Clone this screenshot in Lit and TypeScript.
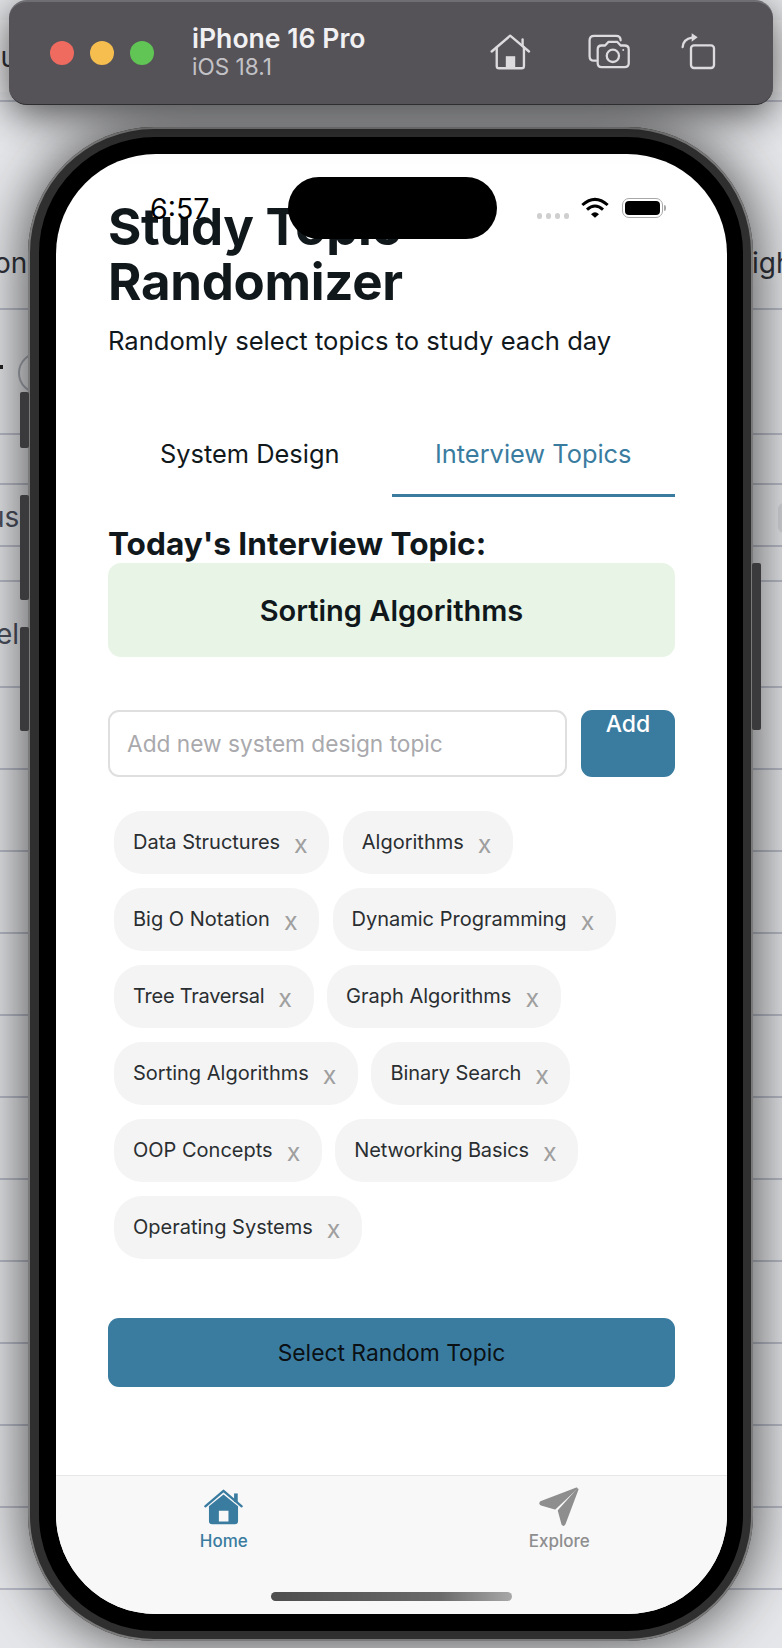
import { LitElement, html, css, svg } from 'lit'
import { customElement } from 'lit/decorators.js'

const TOPICS: [string, number][] = [
  ['Data Structures', 0],
  ['Algorithms', 0],
  ['Big O Notation', 0],
  ['Dynamic Programming', 0],
  ['Tree Traversal', -0.25],
  ['Graph Algorithms', 0],
  ['Sorting Algorithms', 0],
  ['Binary Search', -0.1],
  ['OOP Concepts', 0],
  ['Networking Basics', -0.12],
  ['Operating Systems', 0],
]

// horizontal rules of the app window behind the simulator
const RULES = [100, 308, 433, 483, 545, 580, 686, 768, 850, 932, 1014, 1096, 1178, 1260, 1342, 1424, 1506, 1588]

const toolbarHome = svg`<svg class="tool" width="42" height="37" viewBox="55 95 125 110" fill="none" stroke="currentColor" stroke-width="7" stroke-linecap="round" stroke-linejoin="round">
  <path d="M63 150 L118 103 L174 150" />
  <path d="M155 114 V132" />
  <path d="M78 138 V193 Q78 200 85 200 H152 Q159 200 159 193 V138" />
  <rect x="105" y="164" width="28" height="36" fill="currentColor" stroke="none" />
</svg>`

const toolbarCamera = svg`<svg class="tool" width="44" height="36" viewBox="350 95 136 110" fill="none" stroke="currentColor" stroke-width="7" stroke-linecap="round" stroke-linejoin="round">
  <path d="M378 180 H372 Q358 180 358 166 V117 Q358 103 372 103 H440 Q454 103 454 117" />
  <path d="M395 200 Q383 200 383 188 V145 Q383 133 395 133 H406 L416 122 H444 L454 133 H466 Q479 133 479 145 V188 Q479 200 466 200 Z" />
  <circle cx="430" cy="165" r="19" />
  <circle cx="462" cy="147" r="3" fill="currentColor" stroke="none" />
</svg>`

const toolbarRotate = svg`<svg class="tool" width="36" height="38" viewBox="630 88 108 112" fill="none" stroke="currentColor" stroke-width="7" stroke-linecap="round" stroke-linejoin="round">
  <rect x="663" y="127" width="69" height="68" rx="9" />
  <path d="M638 132 Q640 108 666 104" />
  <path d="M665 91 L683 103 L665 116 Z" fill="currentColor" stroke="none" />
</svg>`

const tabHome = svg`<svg width="41" height="38" viewBox="100 58 124 112">
  <path d="M107 112 L162 65 L217 112" fill="none" stroke="currentColor" stroke-width="7" stroke-linecap="round" stroke-linejoin="round" />
  <rect x="194" y="73" width="11" height="26" fill="currentColor" />
  <path fill-rule="evenodd" fill="currentColor" d="M118 112 L162 76 L206 112 V156 Q206 166 196 166 H128 Q118 166 118 156 Z M148 125 V158 H177 V125 Z" />
</svg>`

const tabExplore = svg`<svg width="42" height="42" viewBox="1104 50 126 126" fill="currentColor">
  <path stroke="currentColor" stroke-width="5" stroke-linejoin="round" d="M1220 57 L1112 98 Q1108 103 1114 106 L1155 118 Z" />
  <path stroke="currentColor" stroke-width="5" stroke-linejoin="round" d="M1223 60 L1166 124 L1177 165 Q1181 170 1184 164 Z" />
</svg>`

const wifi = svg`<svg width="28" height="22" viewBox="186 40 84 62" fill="none" stroke="#000" stroke-width="9">
  <path d="M190 62 Q228 28 266 62" />
  <path d="M204 76 Q228 54 252 76" />
  <path d="M216 90 L228 100 L240 90 Q228 78 216 90 Z" fill="#000" stroke="none" />
</svg>`

@customElement('app-root')
export class AppRoot extends LitElement {
  static get styles() {
    return css`
      :host {
        display: block;
        position: relative;
        width: 782px;
        height: 1648px;
        overflow: hidden;
        background: #e6e7ea;
        font-family: 'Inter', 'Liberation Sans', sans-serif;
      }

      .rule {
        position: absolute;
        left: 0;
        right: 0;
        height: 2px;
        background: #b9bcc8;
      }

      .band {
        position: absolute;
        top: 20px;
        height: 72px;
        left: 0;
        right: 0;
        background: #ececee;
      }

      .frag {
        position: absolute;
        font-size: 28px;
        line-height: 34px;
        color: #30333a;
      }

      .frag.dim {
        color: #4a4f5c;
      }

      .ring {
        position: absolute;
        left: 18px;
        top: 352px;
        width: 38px;
        height: 38px;
        border: 2px solid #a8abb5;
        border-radius: 50%;
      }

      .tick {
        position: absolute;
        left: 0;
        top: 365px;
        width: 3px;
        height: 4px;
        background: #222;
      }

      .pill {
        position: absolute;
        left: 778px;
        top: 503px;
        width: 12px;
        height: 30px;
        border-radius: 6px;
        background: #d4d5d8;
      }

      .desktop {
        position: relative;
        display: flex;
        flex-direction: column;
      }

      .toolbar {
        box-sizing: border-box;
        position: relative;
        z-index: 2;
        height: 105px;
        margin: 0 9px 0 9px;
        padding: 0 57px 4px 41px;
        display: flex;
        align-items: center;
        background: #555358;
        border-top: 2px solid #6f6e72;
        border-bottom: 1px solid #2e2d30;
        border-radius: 18px;
        box-shadow: 0 10px 40px rgba(0, 0, 0, 0.65);
        color: #dddbde;
      }

      .dots {
        display: flex;
        gap: 16px;
        margin-top: 4px;
      }

      .dot {
        width: 24px;
        height: 24px;
        border-radius: 50%;
      }

      .device-name {
        margin-left: 38px;
        flex: 1;
      }

      .device-name b {
        display: block;
        font-size: 26.6px;
        line-height: 32px;
        font-weight: 600;
        color: #f1f0f2;
      }

      .device-name span {
        display: block;
        font-size: 22.6px;
        line-height: 26px;
        color: #c3c2c6;
      }

      .tools {
        display: flex;
        align-items: center;
      }

      .tool {
        display: block;
      }

      .tools .tool:nth-child(1) {
        margin-right: 56px;
      }

      .tools .tool:nth-child(2) {
        margin-right: 49px;
      }

      .phone {
        box-sizing: border-box;
        position: relative;
        width: 725px;
        height: 1514px;
        margin: 22px 0 0 28px;
        padding: 10px 10px 10px 11px;
        border-radius: 126px;
        background: #2f2f2f;
        box-shadow:
          0 0 0 2px #7a7a7a inset,
          0 0 60px rgba(0, 0, 0, 0.72);
      }

      .side {
        position: absolute;
        width: 9px;
        background: #3a3a3c;
        border-radius: 2px;
      }

      .bezel {
        box-sizing: border-box;
        height: 100%;
        padding: 17px 16px 17px 17px;
        background: #000;
        border-radius: 116px;
      }

      .screen {
        position: relative;
        height: 100%;
        display: flex;
        flex-direction: column;
        background: #fff;
        border-radius: 100px;
        overflow: hidden;
        color: #11181c;
      }

      .time {
        position: absolute;
        left: 94px;
        top: 38px;
        font-size: 28.6px;
        line-height: 34px;
        color: #000;
      }

      .island {
        position: absolute;
        left: 232px;
        top: 23px;
        width: 209px;
        height: 62px;
        border-radius: 31px;
        background: #000;
      }

      .status {
        position: absolute;
        left: 481px;
        top: 43px;
        display: flex;
        align-items: center;
      }

      .signal {
        display: flex;
        gap: 3.6px;
        margin-top: 16px;
        margin-right: 12px;
      }

      .signal i {
        width: 5.4px;
        height: 5.4px;
        border-radius: 50%;
        background: #cfcfcf;
      }

      .battery {
        box-sizing: border-box;
        width: 41px;
        height: 20px;
        margin-left: 13px;
        padding: 2px;
        border: 1.5px solid #a8a8a8;
        border-radius: 7px;
      }

      .battery i {
        display: block;
        height: 100%;
        border-radius: 4px;
        background: #000;
      }

      .nub {
        width: 2px;
        height: 6px;
        margin-left: 1px;
        border-radius: 0 2px 2px 0;
        background: #a8a8a8;
      }

      .content {
        flex: 1;
        padding: 46px 52px 0;
      }

      h1 {
        margin: 0;
        font-size: 51px;
        line-height: 54.5px;
        font-weight: 700;
        letter-spacing: -0.3px;
      }

      .subtitle {
        margin: 15px 0 0;
        font-size: 25.6px;
        line-height: 34px;
      }

      .tabs {
        display: flex;
        margin-top: 62px;
      }

      .tab {
        flex: 1;
        box-sizing: border-box;
        height: 77px;
        padding-top: 17px;
        text-align: center;
        font-size: 25.4px;
        line-height: 34px;
        border-bottom: 3.5px solid transparent;
      }

      .tab.active {
        color: #3a7ca0;
        border-bottom-color: #3a7ca0;
      }

      h2 {
        margin: 28px 0 0;
        font-size: 31.6px;
        line-height: 38px;
        font-weight: 700;
      }

      .result {
        height: 94px;
        display: flex;
        align-items: center;
        justify-content: center;
        background: #e8f5e6;
        border-radius: 13px;
        font-size: 29px;
        font-weight: 600;
      }

      .add-row {
        display: flex;
        gap: 14px;
        margin-top: 53px;
      }

      .input {
        box-sizing: border-box;
        flex: 1;
        height: 67px;
        padding-left: 17px;
        display: flex;
        align-items: center;
        border: 2px solid #dfdfdf;
        border-radius: 11px;
        font-size: 22.7px;
        color: #a9a9ad;
      }

      .add {
        width: 94px;
        height: 67px;
        text-align: center;
        background: #3a7ca0;
        border-radius: 11px;
        color: #fff;
        font-size: 23px;
        font-weight: 500;
        line-height: 29px;
      }

      .chips {
        display: flex;
        flex-wrap: wrap;
        gap: 13.5px;
        margin-top: 33.5px;
        padding-left: 6px;
      }

      .chip {
        box-sizing: border-box;
        height: 63.5px;
        padding: 0 21.5px 0 19px;
        display: flex;
        align-items: center;
        gap: 14px;
        background: #f4f4f4;
        border-radius: 28px;
        font-size: 20px;
        color: #2a2e31;
      }

      .chip span {
        font-size: 25px;
        letter-spacing: 0;
        color: #9f9f9f;
        margin-top: 3px;
      }

      .select {
        height: 69px;
        margin-top: 59px;
        display: flex;
        align-items: center;
        justify-content: center;
        background: #3a7ca0;
        border-radius: 11px;
        font-size: 22.8px;
        color: #0a1014;
      }

      .tabbar {
        box-sizing: border-box;
        position: relative;
        height: 139px;
        display: flex;
        background: #f8f8f8;
        border-top: 1px solid #e6e6e6;
      }

      .tabbar-item {
        flex: 1;
        display: flex;
        flex-direction: column;
        align-items: center;
        color: #8e8e8f;
        font-size: 17px;
        font-weight: 500;
        line-height: 20px;
      }

      .tabbar-item.active {
        color: #3a7ca0;
      }

      .tabbar-item svg {
        display: block;
        height: 42px;
        margin-top: 10px;
        margin-bottom: 3px;
      }

      .home-bar {
        position: absolute;
        left: 215px;
        right: 215px;
        bottom: 13px;
        height: 9px;
        border-radius: 5px;
        background: linear-gradient(90deg, #4e4e4e, #6a6a6a 70%, #a8a8a8);
      }
    `
  }

  renderBackdrop() {
    return html`
      <div class="band"></div>
      ${RULES.map((y) => html`<div class="rule" style="top: ${y}px"></div>`)}
      <span class="frag" style="left: -16px; top: 40px">nu</span>
      <span class="frag" style="left: -6px; top: 246px">ons</span>
      <span class="frag" style="left: 752px; top: 246px">ight</span>
      <span class="frag dim" style="left: -12px; top: 500px">us</span>
      <span class="frag dim" style="left: -4px; top: 617px">el</span>
      <div class="ring"></div>
      <div class="tick"></div>
      <div class="pill"></div>
    `
  }

  renderToolbar() {
    return html`
      <header class="toolbar">
        <div class="dots">
          <div class="dot" style="background: #ef6a5f"></div>
          <div class="dot" style="background: #f5be4f"></div>
          <div class="dot" style="background: #60c554"></div>
        </div>
        <div class="device-name">
          <b>iPhone 16 Pro</b>
          <span>iOS 18.1</span>
        </div>
        <div class="tools">${toolbarHome}${toolbarCamera}${toolbarRotate}</div>
      </header>
    `
  }

  renderStatus() {
    return html`
      <div class="time">6:57</div>
      <div class="island"></div>
      <div class="status">
        <div class="signal"><i></i><i></i><i></i><i></i></div>
        ${wifi}
        <div class="battery"><i></i></div>
        <div class="nub"></div>
      </div>
    `
  }

  render() {
    return html`
      ${this.renderBackdrop()}
      <div class="desktop">
        ${this.renderToolbar()}
        <div class="phone">
          <div class="side" style="left: -8px; top: 265px; height: 56px"></div>
          <div class="side" style="left: -8px; top: 368px; height: 105px"></div>
          <div class="side" style="left: -8px; top: 500px; height: 104px"></div>
          <div class="side" style="right: -8px; top: 436px; height: 167px"></div>
          <div class="bezel">
            <div class="screen">
              <div class="content">
                <h1>Study Topic Randomizer</h1>
                <p class="subtitle">Randomly select topics to study each day</p>
                <div class="tabs">
                  <div class="tab">System Design</div>
                  <div class="tab active">Interview Topics</div>
                </div>
                <h2>Today's Interview Topic:</h2>
                <div class="result">Sorting Algorithms</div>
                <div class="add-row">
                  <div class="input">Add new system design topic</div>
                  <div class="add">Add</div>
                </div>
                <div class="chips">
                  ${TOPICS.map(
                    ([name, tracking]) =>
                      html`<div class="chip" style="letter-spacing: ${tracking}px">${name}<span>x</span></div>`
                  )}
                </div>
                <div class="select">Select Random Topic</div>
              </div>
              <nav class="tabbar">
                <div class="tabbar-item active">${tabHome}Home</div>
                <div class="tabbar-item">${tabExplore}Explore</div>
                <div class="home-bar"></div>
              </nav>
              ${this.renderStatus()}
            </div>
          </div>
        </div>
      </div>
    `
  }
}
